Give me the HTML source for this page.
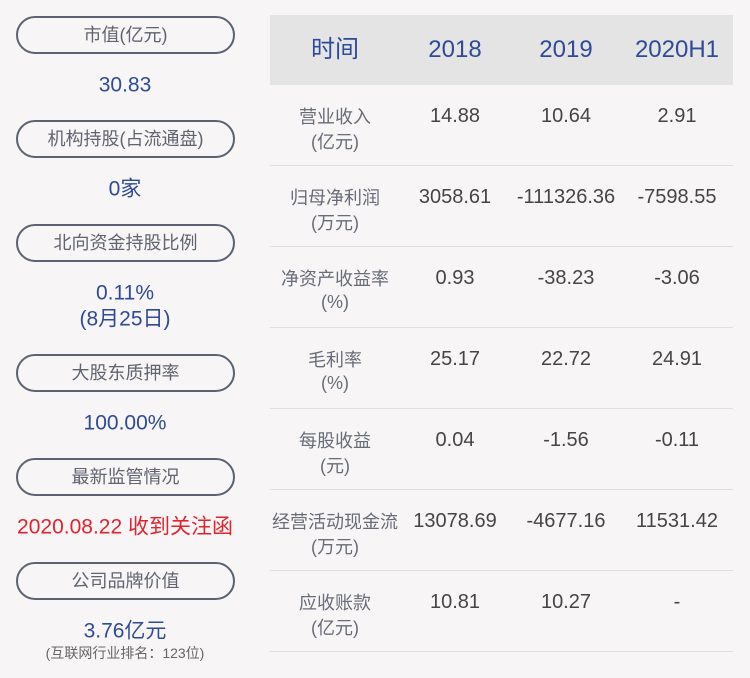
<!DOCTYPE html>
<html><head><meta charset="utf-8"><style>
body{margin:0;width:750px;height:678px;background:#f8f5f6;font-family:"Liberation Sans","Noto Sans CJK SC",sans-serif;position:relative;overflow:hidden}
.a{position:absolute;white-space:nowrap;transform:translate(-50%,-50%);line-height:1}
.pill{position:absolute;left:16px;width:215px;height:34px;border:2px solid #5b6272;border-radius:19px;box-sizing:content-box;text-align:center;line-height:34px;font-size:18px;color:#5f6470}
.v{color:#2e4b97;font-size:21px}
.hd{position:absolute;left:270px;top:15px;width:463px;height:70px;background:#e4e4e4}
.h{color:#2e4b97;font-size:24px}
.l{color:#676c78;font-size:18px}
.n{color:#454545;font-size:20px}
.line{position:absolute;left:270px;width:463px;height:1px;background:#e0dfe0}
</style></head><body>
<div class="pill" style="top:16px">市值(亿元)</div>
<div class="a v" style="left:125px;top:85px">30.83</div>
<div class="pill" style="top:120px">机构持股(占流通盘)</div>
<div class="a v" style="left:125px;top:189px">0家</div>
<div class="pill" style="top:224px">北向资金持股比例</div>
<div class="a v" style="left:125px;top:293px">0.11%</div>
<div class="a v" style="left:125px;top:319px">(8月25日)</div>
<div class="pill" style="top:354px">大股东质押率</div>
<div class="a v" style="left:125px;top:423px">100.00%</div>
<div class="pill" style="top:458px">最新监管情况</div>
<div class="a" style="left:125px;top:527px;color:#e0232e;font-size:21px">2020.08.22 收到关注函</div>
<div class="pill" style="top:562px">公司品牌价值</div>
<div class="a v" style="left:125px;top:631px">3.76亿元</div>
<div class="a" style="left:125px;top:653px;color:#666;font-size:14px">(互联网行业排名：123位)</div>

<div class="hd"></div>
<div class="a h" style="left:335px;top:50px">时间</div>
<div class="a h" style="left:455px;top:50px">2018</div>
<div class="a h" style="left:566px;top:50px">2019</div>
<div class="a h" style="left:677px;top:50px">2020H1</div>

<div class="line" style="top:165px"></div>
<div class="line" style="top:246px"></div>
<div class="line" style="top:327px"></div>
<div class="line" style="top:408px"></div>
<div class="line" style="top:489px"></div>
<div class="line" style="top:570px"></div>
<div class="line" style="top:651px"></div>

<div class="a l" style="left:335px;top:117px">营业收入</div><div class="a l" style="left:335px;top:142px">(亿元)</div>
<div class="a n" style="left:455px;top:116px">14.88</div><div class="a n" style="left:566px;top:116px">10.64</div><div class="a n" style="left:677px;top:116px">2.91</div>

<div class="a l" style="left:335px;top:198px">归母净利润</div><div class="a l" style="left:335px;top:223px">(万元)</div>
<div class="a n" style="left:455px;top:197px">3058.61</div><div class="a n" style="left:566px;top:197px">-111326.36</div><div class="a n" style="left:677px;top:197px">-7598.55</div>

<div class="a l" style="left:335px;top:279px">净资产收益率</div><div class="a l" style="left:335px;top:302px">(%)</div>
<div class="a n" style="left:455px;top:278px">0.93</div><div class="a n" style="left:566px;top:278px">-38.23</div><div class="a n" style="left:677px;top:278px">-3.06</div>

<div class="a l" style="left:335px;top:360px">毛利率</div><div class="a l" style="left:335px;top:383px">(%)</div>
<div class="a n" style="left:455px;top:359px">25.17</div><div class="a n" style="left:566px;top:359px">22.72</div><div class="a n" style="left:677px;top:359px">24.91</div>

<div class="a l" style="left:335px;top:441px">每股收益</div><div class="a l" style="left:335px;top:466px">(元)</div>
<div class="a n" style="left:455px;top:440px">0.04</div><div class="a n" style="left:566px;top:440px">-1.56</div><div class="a n" style="left:677px;top:440px">-0.11</div>

<div class="a l" style="left:335px;top:522px">经营活动现金流</div><div class="a l" style="left:335px;top:547px">(万元)</div>
<div class="a n" style="left:455px;top:521px">13078.69</div><div class="a n" style="left:566px;top:521px">-4677.16</div><div class="a n" style="left:677px;top:521px">11531.42</div>

<div class="a l" style="left:335px;top:603px">应收账款</div><div class="a l" style="left:335px;top:628px">(亿元)</div>
<div class="a n" style="left:455px;top:602px">10.81</div><div class="a n" style="left:566px;top:602px">10.27</div><div class="a n" style="left:677px;top:602px">-</div>
</body></html>
